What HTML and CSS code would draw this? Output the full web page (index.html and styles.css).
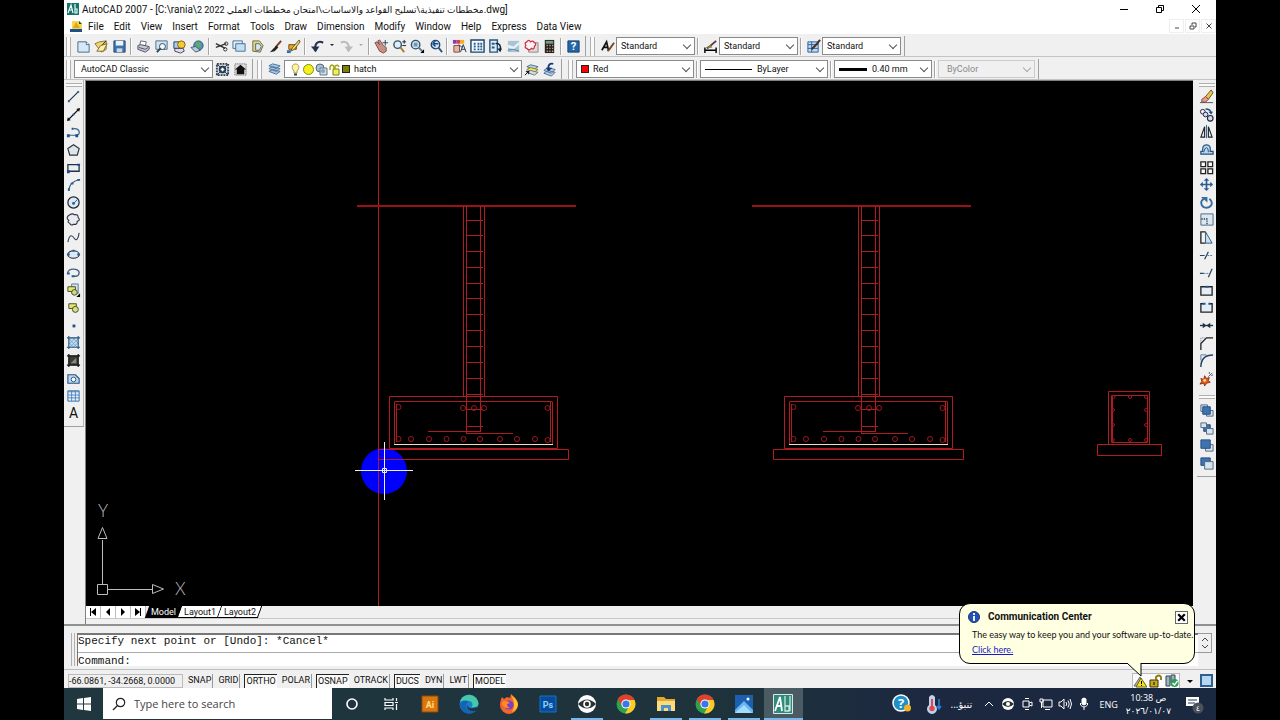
FILE: index.html
```html
<!DOCTYPE html>
<html lang="en">
<head>
    <meta charset="UTF-8">
    <meta name="viewport" content="width=device-width, initial-scale=1.0">
    <title>AutoCAD 2007</title>
    <link rel="stylesheet" href="styles.css">
</head>
<body>
<div class="app">
    <header class="titlebar">
        <svg class="logo" viewBox="0 0 12 12"><path fill="#16726a" d="M0 0h12v12H0z"/><path d="M1 10L4 2l2 8M2 7h4M8 1v9h2V6H8" fill="none" stroke="#e8fffa" stroke-width="1.2"/></svg>
        <span class="title">AutoCAD 2007 - [C:\rania\<span class="path">مخططات تنفيذية\تسليح القواعد والاساسات\امتحان مخططات العملي 2022 2</span>.dwg]</span>
        <div class="window-buttons">
            <button aria-label="Minimize"><svg viewBox="0 0 10 10"><path d="M1 5.5h8"/></svg></button>
            <button aria-label="Restore"><svg viewBox="0 0 10 10"><path d="M1.5 3.500h5v5h-5zM3.500 3V1.500h5v5H7"/></svg></button>
            <button aria-label="Close"><svg viewBox="0 0 10 10"><path d="M1 1l8 8M9 1L1 9"/></svg></button>
        </div>
    </header>

    <nav class="menubar">
        <svg class="doc" viewBox="0 0 13 13"><path d="M2 1h7l3 3v8H2z" fill="#f7d64d"/><path d="M0 9h12v3H0z" fill="#1b4f8f"/><path d="M3 8l3-6 4 6z" fill="#e2a514"/><path d="M9 1l3 3H9z" fill="#244"/></svg>
        <a href="#">File</a>
        <a href="#">Edit</a>
        <a href="#">View</a>
        <a href="#">Insert</a>
        <a href="#">Format</a>
        <a href="#">Tools</a>
        <a href="#">Draw</a>
        <a href="#">Dimension</a>
        <a href="#">Modify</a>
        <a href="#">Window</a>
        <a href="#">Help</a>
        <a href="#">Express</a>
        <a href="#">Data View</a>
        <div class="doc-buttons">
            <button aria-label="Minimize drawing"><svg viewBox="0 0 8 8"><path d="M2 6h4"/></svg></button>
            <button aria-label="Restore drawing"><svg viewBox="0 0 8 8"><path d="M1 4h4v3H1zM3 3V1h4v4H6"/></svg></button>
            <button aria-label="Close drawing"><svg viewBox="0 0 8 8"><path d="M1.500 1.500l5 5M6.500 1.500l-5 5"/></svg></button>
        </div>
    </nav>

    <div class="toolbars">
        <div class="bar">
            <span class="grip"></span>
            <button class="tool" aria-label="New"><svg viewBox="0 0 16 16"><path d="M2 3h9l3 3v8H2z" fill="#d5e8f6" stroke="#45678c"/><path d="M11 3v3h3" fill="#fff" stroke="#45678c"/></svg></button>
            <button class="tool" aria-label="Open"><svg viewBox="0 0 16 16"><path d="M1 5l5-2 7-1v9l-5 3z" fill="#f0d678" stroke="#8b7428"/><path d="M3 13l4-6 7-2-4 8z" fill="#fff0a8" stroke="#77672d"/><path d="M9 6l4-4" stroke="#222"/></svg></button>
            <button class="tool" aria-label="Save"><svg viewBox="0 0 16 16"><path d="M2 2h12v12H2z" fill="#3d72a6" stroke="#2a4a74"/><path d="M4 2h8v5H4z" fill="#e9f3fb"/><path d="M5 10h6v4H5z" fill="#c6dcee"/></svg></button>
            <span class="sep"></span>
            <button class="tool" aria-label="Plot"><svg viewBox="0 0 16 16"><path d="M5 2l6 1-1 4H4z" fill="#fff" stroke="#667"/><path d="M2 7l3-1 9 2v3l-4 3-8-3z" fill="#c6cad6" stroke="#4b5164"/><path d="M3 9l7 2 3-2" fill="none" stroke="#4b5164"/></svg></button>
            <button class="tool" aria-label="Plot Preview"><svg viewBox="0 0 16 16"><path d="M2 2h12v9H2z" fill="#cfe4f4" stroke="#4c6c8c"/><circle cx="9" cy="8" r="3.200" fill="#eef8ff" stroke="#345"/><path d="M7 10l-4 4" stroke="#345" stroke-width="2"/></svg></button>
            <button class="tool" aria-label="Publish"><svg viewBox="0 0 16 16"><path d="M2 3h8v7H2z" fill="#a9cdee" stroke="#246"/><circle cx="10" cy="6" r="4" fill="#f5c83c" stroke="#875f00"/><path d="M3 10h9l1 3-4 2-6-2z" fill="#dde" stroke="#445"/></svg></button>
            <button class="tool" aria-label="3D DWF"><svg viewBox="0 0 16 16"><circle cx="9" cy="7" r="5" fill="#4a93c4" stroke="#2c5377"/><path d="M6 4l4-1 2 4-4 3z" fill="#5fae5a"/><path d="M1 9l5-1 5 4-5 2z" fill="#bcd" stroke="#456"/></svg></button>
            <span class="sep"></span>
            <button class="tool" aria-label="Cut"><svg viewBox="0 0 16 16"><path d="M2 5l10 5M2 9l11-4" stroke="#333" stroke-width="1.500"/><circle cx="13" cy="5" r="1.800" fill="none" stroke="#333"/><circle cx="12" cy="11" r="1.800" fill="none" stroke="#333"/></svg></button>
            <button class="tool" aria-label="Copy"><svg viewBox="0 0 16 16"><path d="M1 2h10v8H1z" fill="#e0effa" stroke="#456f96"/><path d="M4 5h10v8H4z" fill="#c4dff2" stroke="#456f96"/></svg></button>
            <button class="tool" aria-label="Paste"><svg viewBox="0 0 16 16"><path d="M3 2h7l4 5-3 7-8-1z" fill="#e0d58a" stroke="#6d6a3a"/><path d="M6 5h4l2 3-2 4H6z" fill="#d5e7f5" stroke="#567"/></svg></button>
            <button class="tool" aria-label="Match Properties"><svg viewBox="0 0 16 16"><path d="M14 2L8 9" stroke="#7b3b1c" stroke-width="2"/><path d="M9 7l2 2-4 4-5 1 3-3z" fill="#222"/></svg></button>
            <button class="tool" aria-label="Block Editor"><svg viewBox="0 0 16 16"><path d="M3 6h8v5H3z" fill="#e8a534" stroke="#7b4c08"/><path d="M14 1L7 9l-2 4 4-2 6-8z" fill="#f6d860" stroke="#553"/><path d="M1 12h4v3H1z" fill="#336ab0"/></svg></button>
            <span class="sep"></span>
            <button class="tool" aria-label="Undo"><svg viewBox="0 0 16 16"><path d="M14 4C9 1 4 5 6 13" fill="none" stroke="#223153" stroke-width="2.200"/><path d="M1 8h9l-4 6z" fill="#223153"/></svg></button>
            <button class="drop" aria-label="Undo list"></button>
            <button class="tool" aria-label="Redo"><svg viewBox="0 0 16 16"><path d="M2 4c5-3 10 1 8 9" fill="none" stroke="#bbb" stroke-width="2.200"/><path d="M15 8H6l4 6z" fill="#bbb"/></svg></button>
            <button class="drop off" aria-label="Redo list"></button>
            <span class="sep"></span>
            <button class="tool" aria-label="Pan"><svg viewBox="0 0 16 16"><path d="M1 4l2-1 3 3-2-4 2-1 4 6 3 2v4l-3 2-4-2z" fill="#c98f84" stroke="#7c4d48"/><path d="M12 1v6M9 4h6" stroke="#246"/></svg></button>
            <button class="tool" aria-label="Zoom Realtime"><svg viewBox="0 0 16 16"><circle cx="6" cy="6" r="4" fill="#dceefa" stroke="#356" stroke-width="1.500"/><path d="M9 9l4 5" stroke="#a67a3c" stroke-width="2"/><path d="M11 3h4M13 1v4M11 7h4" stroke="#124"/></svg></button>
            <button class="tool" aria-label="Zoom Window"><svg viewBox="0 0 16 16"><circle cx="6" cy="6" r="4.500" fill="#cfe4f4" stroke="#356" stroke-width="1.500"/><path d="M4 4h4v4H4z" fill="#6e94b8"/><path d="M9 9l4 4" stroke="#678" stroke-width="2"/><path d="M15 11v4h-4z" fill="#000"/></svg></button>
            <button class="tool" aria-label="Zoom Previous"><svg viewBox="0 0 16 16"><circle cx="8" cy="6" r="4.500" fill="#cfe4f4" stroke="#246" stroke-width="1.500"/><path d="M5 5h6M5 5l3-3M5 5l3 3" stroke="#124a90" stroke-width="1.500"/><path d="M11 9l4 5" stroke="#357" stroke-width="2"/></svg></button>
            <span class="sep"></span>
            <button class="tool" aria-label="Properties"><svg viewBox="0 0 16 16"><path d="M1 1h4v4H1z" fill="#7a3fc0"/><path d="M5 1h4v4H5z" fill="#e04040"/><path d="M9 1h4v4H9z" fill="#f0b020"/><path d="M2 7h6v7H2z" fill="#e7b7a5" stroke="#844"/><path d="M9 14l3-8 3 8M10 11h4M7 6l4 3" fill="none" stroke="#234"/></svg></button>
            <button class="tool" aria-label="DesignCenter"><svg viewBox="0 0 16 16"><path d="M1 1h14v13H1z" fill="#f4faff" stroke="#1c4268" stroke-width="1.500"/><path d="M4 4h2v2H4zM8 4h2v2H8zM11 4h2v2h-2zM4 7h2v2H4zM8 7h2v2H8zM11 7h2v2h-2zM4 10h2v2H4zM8 10h2v2H8zM11 10h2v2h-2z" fill="#2b5a8c"/></svg></button>
            <button class="tool" aria-label="Tool Palettes"><svg viewBox="0 0 16 16"><path d="M2 1h8v13H2z" fill="#dcebf8" stroke="#2b567f" stroke-width="1.500"/><path d="M4 4h3v2H4zM4 8h3v2H4z" fill="#2b567f"/><path d="M8 5c4-1 6 2 5 6" fill="none" stroke="#123" stroke-width="1.500"/><path d="M10 10h5l-2 4z" fill="#123"/></svg></button>
            <button class="tool" aria-label="Sheet Set Manager"><svg viewBox="0 0 16 16"><path d="M2 2h12v12H2z" fill="#a9c4d6"/><path d="M2 6l6 2 6-5v3l-6 5-6-2z" fill="#e8f2f8"/><path d="M2 12l6-1 6 2" fill="none" stroke="#5c7b92"/></svg></button>
            <button class="tool" aria-label="Markup Set Manager"><svg viewBox="0 0 16 16"><path d="M5 4h10v10H5z" fill="#e3d7d9" stroke="#888"/><path d="M3 3q2-3 4 0 3-2 4 1 3 1 0 4 0 4-3 2-3 3-5 0-3-1-1-3-2-3 1-4z" fill="#fdf1f1" stroke="#d02a3c" stroke-width="1.300"/></svg></button>
            <button class="tool" aria-label="QuickCalc"><svg viewBox="0 0 16 16"><path d="M3 1h10v14H3z" fill="#2a1f1c"/><path d="M4 2h8v3H4z" fill="#6fa08a"/><path d="M5 7h1M8 7h1M11 7h1M5 10h1M8 10h1M11 10h1M5 13h1M8 13h1M11 13h1" stroke="#e9d9b8" stroke-width="1.500"/></svg></button>
            <span class="sep"></span>
            <button class="tool" aria-label="Help"><svg viewBox="0 0 16 16"><path d="M2 2h12v12H2z" fill="#2467a8" stroke="#17406d"/><text x="8" y="12" class="mark">?</text></svg></button>
            <span class="bar-end"></span>
            <span class="grip"></span>
            <button class="tool" aria-label="Text Style"><svg viewBox="0 0 16 16"><path d="M2 12L7 3l2 9M4 9h5" fill="none" stroke="#111" stroke-width="1.800"/><path d="M15 4l-5 7-2 2" fill="none" stroke="#754720" stroke-width="2"/></svg></button>
            <span class="combo style"><select aria-label="Text style"><option>Standard</option></select></span>
            <span class="sep"></span>
            <button class="tool" aria-label="Dimension Style"><svg viewBox="0 0 16 16"><path d="M2 9v6M14 9v6M2 12h12" stroke="#000" stroke-width="1.500"/><path d="M14 2L7 8l-3 2" fill="none" stroke="#634" stroke-width="2"/><path d="M4 10l4-4 2 3z" fill="#7c8c3a"/></svg></button>
            <span class="combo style"><select aria-label="Dimension style"><option>Standard</option></select></span>
            <span class="sep"></span>
            <button class="tool" aria-label="Table Style"><svg viewBox="0 0 16 16"><path d="M2 3h11v11H2z" fill="#bcd7f2" stroke="#2f5f9c"/><path d="M2 6h11M2 10h11M6 3v11" stroke="#2f5f9c"/><path d="M15 1l-5 6-4 4" fill="none" stroke="#432" stroke-width="2.200"/></svg></button>
            <span class="combo style"><select aria-label="Table style"><option>Standard</option></select></span>
            <span class="bar-end"></span>
        </div>

        <div class="bar">
            <span class="grip"></span>
            <span class="combo workspace-name"><select aria-label="Workspace"><option>AutoCAD Classic</option></select></span>
            <button class="tool" aria-label="Workspace Settings"><svg viewBox="0 0 16 16"><path d="M2 2h12v12H2z" fill="#cfd8e4" stroke="#345" stroke-dasharray="2 1" stroke-width="2"/><circle cx="8" cy="8" r="3" fill="none" stroke="#234" stroke-width="1.800"/><path d="M3 3l10 10M13 3L3 13" stroke="#234"/><circle cx="8" cy="8" r="1.500" fill="#fff"/></svg></button>
            <button class="tool" aria-label="My Workspace"><svg viewBox="0 0 16 16"><path d="M2 2h12v12H2z" fill="#ddd" stroke="#555" stroke-dasharray="1 1"/><path d="M2 8l6-5 6 5h-2v5H4V8z" fill="#111"/></svg></button>
            <span class="bar-end"></span>
            <span class="grip"></span>
            <button class="tool" aria-label="Layer Properties"><svg viewBox="0 0 16 16"><path d="M2 10l4-2 8 2-4 3zM2 7l4-2 8 2-4 3zM2 4l4-2 8 2-4 3z" fill="#a9c7e4" stroke="#4b719a"/></svg></button>
            <span class="combo layer">
                <svg viewBox="0 0 13 13"><path d="M6.500 1C3 1 2 5 5 8v2h3V8c3-3 2-7-1.500-7z" fill="#fff3a0" stroke="#a49a50"/><path d="M5 11.500h3" stroke="#445" stroke-width="2"/></svg>
                <svg viewBox="0 0 13 13"><circle cx="6.500" cy="6.500" r="5" fill="#f3f01c" stroke="#8a8a10"/></svg>
                <svg viewBox="0 0 13 13"><circle cx="5" cy="5" r="4" fill="#a7c1d6" stroke="#567"/><path d="M5 5h7v7H5z" fill="#cbdcea" stroke="#678"/><circle cx="8" cy="8" r="2" fill="#8aa4b8"/></svg>
                <svg viewBox="0 0 13 13"><path d="M2 7V4q2-4 4 0v2" fill="none" stroke="#a2a514" stroke-width="1.500"/><path d="M5 6h6v6H5z" fill="#eef05c" stroke="#7d7f18"/><path d="M7 6V3q3-2 4 1" fill="none" stroke="#a2a514" stroke-width="1.500"/></svg>
                <span class="swatch olive"></span>
                <select aria-label="Layer"><option>hatch</option></select>
            </span>
            <button class="tool" aria-label="Make Object's Layer Current"><svg viewBox="0 0 16 16"><path d="M3 5l4-2 8 2-4 3z" fill="#b9d2e6" stroke="#4b6b85"/><path d="M3 8l4-2 8 2-4 3z" fill="#f2ea5e" stroke="#85802a"/><path d="M3 11l4-2 8 2-4 3z" fill="#d5dce2" stroke="#678"/><path d="M1 14l4-4M2 10h3v3" fill="none" stroke="#000"/></svg></button>
            <button class="tool" aria-label="Layer Previous"><svg viewBox="0 0 16 16"><path d="M2 12l4-3 8 2-4 4zM2 9l4-3 8 2-4 4z" fill="#b9d2e6" stroke="#4b6b95"/><path d="M12 2C8 1 6 4 7 7" fill="none" stroke="#15397a" stroke-width="2"/><path d="M4 6h7l-4 4z" fill="#15397a"/></svg></button>
            <span class="bar-end layer-end"></span>
            <span class="grip"></span>
            <span class="combo color"><span class="swatch red"></span><select aria-label="Color"><option>Red</option></select></span>
            <span class="sep"></span>
            <span class="combo linetype"><span class="sample thin"></span><select aria-label="Linetype"><option>ByLayer</option></select></span>
            <span class="sep"></span>
            <span class="combo weight"><span class="sample thick"></span><select aria-label="Lineweight"><option>0.40 mm</option></select></span>
            <span class="sep"></span>
            <span class="combo plot"><select aria-label="Plot style" disabled><option>ByColor</option></select></span>
            <span class="bar-end"></span>
        </div>
    </div>

    <main class="workspace">
        <aside class="strip left">
            <span class="grip-h"></span>
            <div class="tools draw-tools">
                <button aria-label="Line"><svg viewBox="0 0 16 16"><path d="M3 13L13 3" stroke="#234" stroke-width="1.200"/><path d="M2 12h2v2H2zM12 2h2v2h-2z" fill="#27639c"/></svg></button>
                <button aria-label="Construction Line"><svg viewBox="0 0 16 16"><path d="M2 14L14 2" stroke="#111" stroke-width="1.500"/><path d="M1 15l1-4 3 3zM15 1l-4 1 3 3z" fill="#111"/><circle cx="8" cy="8" r="1.200" fill="#27639c"/></svg></button>
                <button aria-label="Polyline"><svg viewBox="0 0 16 16"><path d="M2 12h9q4-1 3-4-1-3-5-3H8" fill="none" stroke="#36638c" stroke-width="1.300"/><path d="M1 11h3v3H1zM10 11h3v3h-3zM6 4h2v2H6z" fill="#1d4f86"/></svg></button>
                <button aria-label="Polygon"><svg viewBox="0 0 16 16"><path d="M8 3l6 4-2 7H4L2 7z" fill="#dde6ee" stroke="#333" stroke-width="1.300"/></svg></button>
                <button aria-label="Rectangle"><svg viewBox="0 0 16 16"><path d="M2 5h12v7H2z" fill="#e9eff5" stroke="#234" stroke-width="1.400"/><path d="M1 11h3v3H1zM12 4h3v2h-3z" fill="#1d4f86"/></svg></button>
                <button aria-label="Arc"><svg viewBox="0 0 16 16"><path d="M3 14Q4 5 14 3" fill="none" stroke="#456" stroke-width="1.200"/><path d="M2 12h2v3H2zM5 6h3v2H5zM12 2h3v2h-3z" fill="#1d5f9c"/></svg></button>
                <button aria-label="Circle"><svg viewBox="0 0 16 16"><circle cx="8" cy="8" r="6" fill="#dce9f4" stroke="#223" stroke-width="1.300"/><path d="M8 9l4-4" stroke="#1d5f9c"/><circle cx="8" cy="9" r="1.500" fill="#1d5f9c"/></svg></button>
                <button aria-label="Revision Cloud"><svg viewBox="0 0 16 16"><path d="M4 3q3-2 5 0 4-1 4 3 3 3-1 4 0 4-4 3-3 2-4-1-3-1-1-3-4-3 1-6z" fill="#e8ecf2" stroke="#334" stroke-width="1.200"/></svg></button>
                <button aria-label="Spline"><svg viewBox="0 0 16 16"><path d="M2 13C4 3 7 6 9 9s4 1 5-6" fill="none" stroke="#345" stroke-width="1.200"/></svg></button>
                <button aria-label="Ellipse"><svg viewBox="0 0 16 16"><ellipse cx="8" cy="8" rx="6" ry="4" fill="#dce9f4" stroke="#223" stroke-width="1.200"/><path d="M1 7h3v2H1zM12 7h3v2h-3zM7 3h2v2H7z" fill="#1d5f9c"/></svg></button>
                <button aria-label="Ellipse Arc"><svg viewBox="0 0 16 16"><path d="M2 9C1 3 14 3 14 8c0 4-3 4-6 4" fill="none" stroke="#45637e" stroke-width="1.500"/><path d="M1 8h3v2H1zM6 11h3v2H6z" fill="#1d5f9c"/></svg></button>
                <button aria-label="Insert Block"><svg viewBox="0 0 16 16"><path d="M6 1h7v10H6z" fill="#cfe2f2" stroke="#5a7b98"/><path d="M2 4h8v5H2z" fill="#e5e774" stroke="#444a1c"/><circle cx="9" cy="10" r="3" fill="#c5dd8a" stroke="#444a1c"/><path d="M15 11v4h-4z" fill="#000"/></svg></button>
                <button aria-label="Make Block"><svg viewBox="0 0 16 16"><path d="M3 4h8v5H3z" fill="#e5e774" stroke="#444a1c"/><circle cx="10" cy="10" r="3.200" fill="#d2e08a" stroke="#444a1c"/></svg></button>
                <button aria-label="Point"><svg viewBox="0 0 16 16"><path d="M7 7h3v3H7z" fill="#1d4f86"/></svg></button>
                <button aria-label="Hatch"><svg viewBox="0 0 16 16"><path d="M3 3h10v10H3z" fill="#c3dcf0"/><path d="M3 6l3-3M3 10l7-7M4 13l9-9M8 13l5-5M3 8l5 5M3 4l9 9M7 3l6 6" stroke="#6d9cc4" stroke-width=".8"/><path d="M3 1v14M13 1v14M1 3h14M1 13h14" stroke="#27547f" stroke-width="1.200"/></svg></button>
                <button aria-label="Gradient"><svg viewBox="0 0 16 16"><path d="M3 3h10v10H3z" fill="#3c3c3a"/><path d="M5 11l6-6v6z" fill="#8c8a74"/><path d="M3 1v14M13 1v14M1 3h14M1 13h14" stroke="#111" stroke-width="1.300"/></svg></button>
                <button aria-label="Region"><svg viewBox="0 0 16 16"><path d="M2 4h8l4 4v5H2z" fill="#bcd8f0" stroke="#27547f" stroke-width="1.200"/><circle cx="8" cy="9" r="2.500" fill="#f5faff" stroke="#27547f"/></svg></button>
                <button aria-label="Table"><svg viewBox="0 0 16 16"><path d="M2 3h12v11H2z" fill="#e6f1fb" stroke="#2f68a8"/><path d="M2 4h12M2 7.500h12M2 10.500h12M6 3v11M10 3v11" stroke="#4d83bd"/></svg></button>
                <button class="letter" aria-label="Multiline Text">A</button>
            </div>
        </aside>

        <section class="viewport">
            <!-- model space, footing sections -->
            <svg class="drawing" viewBox="86 81 1107 525" preserveAspectRatio="xMidYMid slice">
                <defs>
                    <g id="footing">
                        <path class="ground" d="M357 206H576"/>
                        <path d="M463.500 206V396M484.500 206V396M466.500 206V433M480.500 206V431"/>
                        <path d="M466 220.500h17M466 235.500h17M466 251.500h17M466 267.500h17M466 283.500h17M466 298.500h17M466 314.500h17M466 330.500h17M466 346.500h17M466 362.500h17M466 378.500h17M466 394.500h17M466 409.500h17M466 426.500h17"/>
                        <path d="M428 431.500h53M466 433.500h47"/>
                        <path d="M389.500 396.500h168v52h-168zM394.500 401.500h158M394.500 402v42M396.500 404v38M550.500 402v40M552.500 402v42"/>
                        <g class="rebar">
                            <circle cx="398.500" cy="407" r="2.500"/><circle cx="463" cy="408" r="2.500"/><circle cx="474" cy="408" r="2.500"/><circle cx="484" cy="408" r="2.500"/><circle cx="547.500" cy="408" r="2.500"/>
                            <circle cx="398.500" cy="439" r="2.500"/><circle cx="411" cy="439" r="2.500"/><circle cx="429" cy="439" r="2.500"/><circle cx="446.500" cy="439" r="2.500"/><circle cx="463.500" cy="439" r="2.500"/><circle cx="480" cy="439" r="2.500"/><circle cx="500" cy="439" r="2.500"/><circle cx="517" cy="439" r="2.500"/><circle cx="535" cy="439" r="2.500"/><circle cx="547.500" cy="440" r="2.500"/>
                        </g>
                        <path class="pale" d="M394 444.500h159"/>
                        <path d="M378.500 449.500h190v10h-190z"/>
                    </g>
                </defs>
                <circle cx="384" cy="471" r="23" fill="#0000fe"/>
                <g class="lines">
                    <path d="M378.500 81V606"/>
                    <use href="#footing"/>
                    <use href="#footing" x="395"/>
                    <path d="M1108.500 391.500h41v53h-41zM1111.500 395.500h36v47h-36zM1097.500 444.500h64v11h-64z"/>
                    <path d="M1112.500 396v46M1147.500 396v46"/>
                    <g class="rebar">
                        <circle cx="1113.500" cy="397" r="1.500"/><circle cx="1130" cy="397" r="1.500"/><circle cx="1146" cy="397" r="1.500"/><circle cx="1113" cy="410" r="1.500"/><circle cx="1146" cy="410" r="1.500"/><circle cx="1113" cy="425" r="1.500"/><circle cx="1146" cy="425" r="1.500"/><circle cx="1113" cy="440" r="1.500"/><circle cx="1130" cy="440" r="1.500"/><circle cx="1146" cy="440" r="1.500"/>
                    </g>
                </g>
                <g class="cursor"><path d="M355 470.500h58M384.500 442v58M382.500 468.500h4v4h-4z"/></g>
                <g class="ucs">
                    <path d="M97.500 584.500h10v10h-10zM107 589.500h45M102.500 584V540M152.500 584.500v9l11-4.500zM98 538.500h9l-4.500-11z"/>
                    <text x="175" y="595">X</text>
                    <text x="98" y="517">Y</text>
                </g>
            </svg>
            <div class="tabs">
                <button aria-label="First tab"><svg viewBox="0 0 10 10"><path d="M2 1h1v8H2zM8 1v8L3 5z"/></svg></button>
                <button aria-label="Previous tab"><svg viewBox="0 0 10 10"><path d="M7 1v8L3 5z"/></svg></button>
                <button aria-label="Next tab"><svg viewBox="0 0 10 10"><path d="M3 1v8l4-4z"/></svg></button>
                <button aria-label="Last tab"><svg viewBox="0 0 10 10"><path d="M7 1h1v8H7zM2 1v8l5-4z"/></svg></button>
                <a class="tab active" href="#">Model</a>
                <a class="tab" href="#">Layout1</a>
                <a class="tab" href="#">Layout2</a>
            </div>
        </section>

        <aside class="strip right">
            <span class="grip-h"></span>
            <div class="tools modify-tools">
                <button aria-label="Erase"><svg viewBox="0 0 16 16"><path d="M7 8l6-7 2 3-5 7z" fill="#efc443" stroke="#5b5230"/><path d="M3 11l4-3 3 3-3 3H3z" fill="#e89a8c" stroke="#844"/><path d="M1 14.500h14" stroke="#555"/></svg></button>
                <button aria-label="Copy objects"><svg viewBox="0 0 16 16"><circle cx="4" cy="5" r="2.500" fill="#eef" stroke="#223"/><circle cx="7" cy="8" r="2.500" fill="#cde" stroke="#223"/><circle cx="12" cy="12" r="3" fill="#cde" stroke="#223" stroke-width="1.200"/><path d="M7 2q5 0 6 4" fill="none" stroke="#1d4f86" stroke-width="1.600"/><path d="M10 5h5l-2 3z" fill="#1d4f86"/></svg></button>
                <button aria-label="Mirror"><svg viewBox="0 0 16 16"><path d="M6 3v11H2zM10 3v11h4z" fill="#e4eef6" stroke="#222" stroke-width="1.200"/><path d="M8 1v14" stroke="#1d5f9c"/></svg></button>
                <button aria-label="Offset"><svg viewBox="0 0 16 16"><path d="M2 13h13v-3h-3q1-7-4-7T4 10H2z" fill="#bcd8f0" stroke="#234f7c" stroke-width="1.300"/><path d="M5 11q1-5 3-5t2 5" fill="none" stroke="#234f7c"/></svg></button>
                <button aria-label="Array"><svg viewBox="0 0 16 16"><path d="M2 2h5v5H2zM9.500 2h5v5h-5zM2 9.500h5v5H2zM9.500 9.500h5v5h-5z" fill="#fff" stroke="#222" stroke-width="1.400"/></svg></button>
                <button aria-label="Move"><svg viewBox="0 0 16 16"><path d="M8 3v10M3 8h10" stroke="#2b5f93" stroke-width="1.800"/><path d="M8 1l3 3H5zM8 15l3-3H5zM1 8l3-3v6zM15 8l-3-3v6z" fill="#2b5f93"/></svg></button>
                <button aria-label="Rotate"><svg viewBox="0 0 16 16"><path d="M11 4q4 3 2 7-3 4-8 2-4-3-2-7l2-2" fill="none" stroke="#3a6c9c" stroke-width="2"/><path d="M2 2h7v6z" fill="#3a6c9c"/></svg></button>
                <button aria-label="Scale"><svg viewBox="0 0 16 16"><path d="M2 2h13v12H2z" fill="#dbe7f1" stroke="#4a6884"/><path d="M2.500 7.500h6v6" fill="none" stroke="#345" stroke-width="1.500" stroke-dasharray="1.500 1"/></svg></button>
                <button aria-label="Stretch"><svg viewBox="0 0 16 16"><path d="M7 2H2v12h5" fill="none" stroke="#222" stroke-width="1.400"/><path d="M7 2v12h7z" fill="#cfe0ef" stroke="#2a567f"/></svg></button>
                <button aria-label="Trim"><svg viewBox="0 0 16 16"><path d="M1 8h5M6 12l4-8" stroke="#246" stroke-width="1.300"/><path d="M9 8h6" stroke="#579" stroke-dasharray="2 1"/></svg></button>
                <button aria-label="Extend"><svg viewBox="0 0 16 16"><path d="M1 9h4M10 13l4-9" stroke="#246" stroke-width="1.300"/><path d="M5 9h6" stroke="#579" stroke-dasharray="2 1"/></svg></button>
                <button aria-label="Break at Point"><svg viewBox="0 0 16 16"><path d="M2 4h12v9H2z" fill="#e4eef6" stroke="#222" stroke-width="1.400"/><path d="M7 3h3v2H7z" fill="#1d5f9c"/></svg></button>
                <button aria-label="Break"><svg viewBox="0 0 16 16"><path d="M5 4H2v9h12V4h-3" fill="#e4eef6" stroke="#222" stroke-width="1.400"/><path d="M4 3h3v2H4zM10 3h2v2h-2z" fill="#1d5f9c"/></svg></button>
                <button aria-label="Join"><svg viewBox="0 0 16 16"><path d="M1 8h14" stroke="#234" stroke-width="1.500"/><path d="M8 8L4 5v6zM8 8l4-3v6z" fill="#234"/></svg></button>
                <button aria-label="Chamfer"><svg viewBox="0 0 16 16"><path d="M2 15V8l6-6h7" fill="none" stroke="#222" stroke-width="1.400"/><path d="M2 7V2h5" fill="none" stroke="#579" stroke-dasharray="1 1"/></svg></button>
                <button aria-label="Fillet"><svg viewBox="0 0 16 16"><path d="M2 15q0-13 13-13" fill="none" stroke="#246" stroke-width="1.600"/><path d="M2 8V2h6" fill="none" stroke="#579"/></svg></button>
                <button aria-label="Explode"><svg viewBox="0 0 16 16"><path d="M2 8l3 1 1-4 2 3 3-1-1 3 2 2-4 1-2 3-1-3-4 1 2-3z" fill="#e25a1e" stroke="#7a1c08" stroke-width=".8"/><circle cx="6" cy="10" r="1.500" fill="#ffe26a"/><path d="M10 6l4-4M13 5l2-1M11 3V1" stroke="#555"/></svg></button>
            </div>
            <span class="grip-h second"></span>
            <div class="tools order-tools">
                <button aria-label="Bring to Front"><svg viewBox="0 0 16 16"><path d="M2 2h7v7H2zM8 8h7v6H8z" fill="#d4e4f1" stroke="#567"/><path d="M4 4h8v8H4z" fill="#3f73b0" stroke="#234f85"/></svg></button>
                <button aria-label="Send to Back"><svg viewBox="0 0 16 16"><path d="M5 4h7v7H5z" fill="#3f73b0" stroke="#234f85"/><path d="M2 2h6v5H2zM8 8h7v6H8z" fill="#d4e4f1" stroke="#567"/></svg></button>
                <button aria-label="Bring Above Objects"><svg viewBox="0 0 16 16"><path d="M7 7h8v7H7z" fill="#d4e4f1" stroke="#567"/><path d="M2 2h10v9H2z" fill="#3f73b0" stroke="#234f85"/></svg></button>
                <button aria-label="Send Under Objects"><svg viewBox="0 0 16 16"><path d="M2 2h10v8H2z" fill="#3f73b0" stroke="#234f85"/><path d="M6 6h9v8H6z" fill="#d4e4f1" stroke="#567"/></svg></button>
            </div>
        </aside>
    </main>

    <section class="command">
        <span class="command-grip"></span>
        <div class="command-box">
            <p class="history">Specify next point or [Undo]: *Cancel*</p>
            <div class="prompt"><label for="command-line">Command:</label><input id="command-line" type="text"></div>
        </div>
        <div class="scroller">
            <button aria-label="Scroll up"><svg viewBox="0 0 8 8"><path d="M1 6l3-3 3 3"/></svg></button>
            <button aria-label="Scroll down"><svg viewBox="0 0 8 8"><path d="M1 2l3 3 3-3"/></svg></button>
        </div>
    </section>

    <footer class="status">
        <span class="coords">-66.0861, -34.2668, 0.0000</span>
        <button>SNAP</button>
        <button>GRID</button>
        <button class="on">ORTHO</button>
        <button>POLAR</button>
        <button class="on">OSNAP</button>
        <button>OTRACK</button>
        <button class="on">DUCS</button>
        <button>DYN</button>
        <button>LWT</button>
        <button class="on">MODEL</button>
        <div class="status-tray">
            <svg viewBox="0 0 14 14"><path d="M1 12l6-9 3 9z" fill="#bbb" stroke="#666"/><path d="M8 4l6 9H3z" fill="#f3e11c" stroke="#6c6510"/><path d="M8.500 7v3M8.500 11v1" stroke="#000"/></svg>
            <svg viewBox="0 0 14 14"><path d="M1 6h8v7H1z" fill="#c9a91c" stroke="#3c3208"/><path d="M7 6V3q3-3 5 0v3" fill="none" stroke="#8a7412" stroke-width="1.800"/><path d="M5 8v3" stroke="#000"/></svg>
            <svg viewBox="0 0 14 14"><path d="M1 2h4v10H1zM6 1h4v8H6z" fill="#9ab4bd" stroke="#345"/><circle cx="9.500" cy="9" r="4" fill="#2f9b57"/><path d="M7.500 9l2 2 3-4" fill="none" stroke="#fff" stroke-width="1.300"/></svg>
        </div>
        <button class="tray-menu" aria-label="Tray menu"></button>
        <button class="clean" aria-label="Clean Screen"></button>
    </footer>

    <div class="balloon" role="dialog" aria-labelledby="balloon-title">
        <svg class="info" viewBox="0 0 12 12"><circle cx="6" cy="6" r="5.500" fill="#2350b8" stroke="#173577"/><path d="M6 2v2M6 5v5" stroke="#fff" stroke-width="1.800"/></svg>
        <h2 id="balloon-title">Communication Center</h2>
        <button aria-label="Close"><svg viewBox="0 0 10 10"><path d="M2 2l6 6M8 2L2 8"/></svg></button>
        <p>The easy way to keep you and your software up-to-date.<br><a href="#">Click here.</a></p>
        <svg class="tail" viewBox="0 0 16 14"><path d="M1 0l14 13V0" fill="#ffffe1" stroke="#000"/></svg>
    </div>

    <div class="taskbar">
        <button class="start" aria-label="Start"><svg viewBox="0 0 14 14"><path d="M0 2l6-1v5.500H0zM7 1l7-1v6.500H7zM0 7.500h6V13l-6-1zM7 7.500h7V14l-7-1z" fill="#fff"/></svg></button>
        <label class="search">
            <svg viewBox="0 0 14 14"><circle cx="8.500" cy="5.500" r="4.200"/><path d="M5.500 8.500L1 13"/></svg>
            <input type="text" placeholder="Type here to search" aria-label="Search">
        </label>
        <div class="apps">
            <button aria-label="Cortana"><svg viewBox="0 0 20 20"><circle cx="10" cy="10" r="5" fill="none" stroke="#fff" stroke-width="1.600"/></svg></button>
            <button aria-label="Task View"><svg viewBox="0 0 20 20"><path d="M4 4v2h8V4M4 16v-2h8v2M4 8.500h8v3H4zM15.500 4v3M15.500 10v6M14 8.500h3" fill="none" stroke="#fff" stroke-width="1.200"/></svg></button>
            <button aria-label="Illustrator"><svg viewBox="0 0 20 20"><path d="M2 2h16v16H2z" fill="#d9760f" stroke="#8f4a06"/><text x="10" y="13.500" fill="#ffe082">Ai</text></svg></button>
            <button aria-label="Edge"><svg viewBox="0 0 20 20"><circle cx="10" cy="10" r="9.500" fill="#1b7fd0"/><path d="M1 8C3-1 17-2 19.500 9c0 4-4 5-7 4 2-2 1-6-3-6-4-1-7 0-8.500 1z" fill="#46c9a8"/><path d="M1 10c2-4 6-4 9-2-4 1-4 7 1 9 3 1 5 0 7-1-3 5-16 6-17-6z" fill="#1464b4"/><path d="M9 10c-1 3 2 5 5 4l5-1v3c-6 3-13 0-10-6z" fill="#20353f"/></svg></button>
            <button aria-label="Firefox"><svg viewBox="0 0 20 20"><path d="M3 3l2 2 3-2 3 1 1-4c2 2 7 5 7 11a9 9 0 01-18 0c0-3 1-6 2-8z" fill="#f2662b"/><path d="M12 1c3 3 7 5 7 10-1 4-4 6-6 7 3-5 3-10-1-17z" fill="#fdc22e"/><circle cx="10" cy="11" r="4.500" fill="#7a41c6"/><path d="M3 8c3-2 6-1 8 1l-3 1c0 2 1 3 3 4-4 1-8-2-8-6z" fill="#ff8b27"/></svg></button>
            <button aria-label="Photoshop"><svg viewBox="0 0 20 20"><path d="M2 2h16v16H2z" fill="#0a4a9a" stroke="#0a79c9"/><text x="10" y="13.500" fill="#8bd2ff">Ps</text></svg></button>
            <button class="open" aria-label="Viewer"><svg viewBox="0 0 20 20"><circle cx="10" cy="10" r="9" fill="#fff"/><path d="M1 10q9-9 18 0-9 9-18 0z" fill="#2b3034"/><circle cx="10" cy="10" r="3.800" fill="#fff"/><circle cx="10" cy="10" r="2.200" fill="#2b3034"/></svg></button>
            <button aria-label="Chrome"><svg viewBox="0 0 20 20"><circle cx="10" cy="10" r="9.500" fill="#2fa24f"/><path d="M1.800 5.200A9.500 9.500 0 0118.500 6H10l-4 6z" fill="#e2402f"/><path d="M18.500 6A9.500 9.500 0 019 19.500l5-8L13 6z" fill="#fbca23"/><circle cx="10" cy="10" r="4.600" fill="#fff"/><circle cx="10" cy="10" r="3.600" fill="#3b78e7"/></svg></button>
            <button class="open" aria-label="File Explorer"><svg viewBox="0 0 20 20"><path d="M1 3h7l2 2h9v12H1z" fill="#e3a92a"/><path d="M1 7h18v10H1z" fill="#fbdc78"/><path d="M5 17v-6h10v6h-3v-3H8v3z" fill="#4d91cf"/></svg></button>
            <button class="open" aria-label="Chrome window"><svg viewBox="0 0 20 20"><circle cx="10" cy="10" r="9.500" fill="#2fa24f"/><path d="M1.800 5.200A9.500 9.500 0 0118.500 6H10l-4 6z" fill="#e2402f"/><path d="M18.500 6A9.500 9.500 0 019 19.500l5-8L13 6z" fill="#fbca23"/><circle cx="10" cy="10" r="4.600" fill="#fff"/><circle cx="10" cy="10" r="3.600" fill="#3b78e7"/></svg></button>
            <button class="open" aria-label="Photos"><svg viewBox="0 0 20 20"><path d="M1 1h18v18H1z" fill="#1c5fae"/><path d="M1 16l9-9 9 9v3H1z" fill="#66b8f2"/><path d="M1 19l9-8 8 8z" fill="#a4dcff"/><circle cx="14" cy="5" r="1.500" fill="#fff"/></svg></button>
            <button class="open current" aria-label="AutoCAD"><svg viewBox="0 0 20 20"><path d="M.500.500h19v19H.500z" fill="#2e8a7a" stroke="#d8e8e4"/><path d="M2 17L7 3l2 14M4 12h5" fill="none" stroke="#fff" stroke-width="1.800"/><path d="M12 2v15h4v-5h-4M17 2v15" fill="none" stroke="#cfe8e0" stroke-width="1.300"/></svg></button>
        </div>
        <div class="tray">
            <button class="assist" aria-label="Assistance"><svg viewBox="0 0 20 20"><circle cx="9" cy="9" r="8" fill="#1f8fc9" stroke="#fff" stroke-width="1.500"/><text x="9" y="13.500" class="ask">?</text><circle cx="15.500" cy="14" r="3.500" fill="#f0b323"/></svg></button>
            <button class="weather"><svg viewBox="0 0 16 20"><path d="M3 3q3-4 6 0v8a5 5 0 11-6 0z" fill="#b9d3f0"/><path d="M6 5v9" stroke="#e2474a" stroke-width="2"/><circle cx="6" cy="14.500" r="2.700" fill="#e2474a"/><path d="M13 5v9M11 12l2 3 2-3" fill="none" stroke="#2f7fd6" stroke-width="1.500"/></svg><span dir="rtl">تنبؤ...</span></button>
            <div class="tray-icons">
                <button aria-label="Hidden icons"><svg viewBox="0 0 14 14"><path d="M3 9l4-4 4 4"/></svg></button>
                <button aria-label="Viewer status"><svg viewBox="0 0 14 14"><circle cx="7" cy="7" r="6" fill="#fff" stroke="none"/><path d="M1 7q6-6 12 0-6 6-12 0z" fill="#2b3034" stroke="none"/><circle cx="7" cy="7" r="2" fill="#fff" stroke="none"/></svg></button>
                <button aria-label="Meet Now"><svg viewBox="0 0 14 14"><path d="M3 4h6v6H3zM9 6l3-1v4L9 8M5 1.500h4M5 12.500h4"/></svg></button>
                <button aria-label="Network"><svg viewBox="0 0 14 14"><path d="M4 3h9v7H4zM6 12.500h5M1 2h3v3H1zM2.500 5v6"/></svg></button>
                <button aria-label="Volume"><svg viewBox="0 0 14 14"><path d="M1 5h2l3-3v10L3 9H1zM8 5q1.500 2 0 4M10 3.500q2.500 3.500 0 7M12 2q3 5 0 10"/></svg></button>
                <button aria-label="Microphone"><svg viewBox="0 0 14 14"><path d="M5 2q2-2 4 0v5q-2 2-4 0z" fill="#fff"/><path d="M3.500 6v2q3.500 4 7 0V6M7 10v3"/></svg></button>
            </div>
            <button class="lang">ENG</button>
            <button class="clock"><span>10:38 ص</span><span>٢٠٢٦/٠١/٠٧</span></button>
            <button class="notify" aria-label="Notifications"><svg viewBox="0 0 20 20"><path d="M2 3h13v9h-2v3l-3-3H2z" fill="#fff"/><path d="M4 6h9M4 9h7" stroke="#24344a"/><circle cx="14" cy="14" r="5.500" fill="#4a5158"/><text x="14" y="17">٤</text></svg></button>
        </div>
    </div>
</div>
</body>
</html>
```

FILE: styles.css
```css
* {
    box-sizing: border-box;
}
body {
    margin: 0;
    background-color: #000;
    font-family: Roboto, "Liberation Sans", "DejaVu Sans", sans-serif;
    font-size: 10px;
    color: #111;
}
button {
    padding: 0;
    border: none;
    background: none;
    font: inherit;
    color: inherit;
}
button svg {
    display: block;
}
a {
    color: inherit;
    text-decoration: none;
}
.app {
    position: relative;
    display: flex;
    flex-direction: column;
    width: 90%;
    height: 100vh;
    margin: 0 auto;
    background-color: #f0f0f0;
}

/* title and menu */
.titlebar {
    display: flex;
    align-items: center;
    height: 18px;
    padding-left: 3px;
    background-color: #fff;
}
.logo {
    width: 12px;
    height: 12px;
    margin-right: 3px;
}
.title {
    font-size: 10px;
    white-space: nowrap;
}
.path {
    font-size: 9px;
}
.window-buttons {
    display: flex;
    margin-left: auto;
    padding-right: 2px;
}
.window-buttons button {
    display: grid;
    place-items: center;
    width: 36px;
}
.window-buttons svg {
    width: 10px;
    height: 10px;
    fill: none;
    stroke: #000;
}
.menubar {
    display: flex;
    align-items: center;
    gap: 10px;
    height: 16px;
    padding-left: 6px;
    background-color: #fff;
    font-size: 10px;
}
.doc {
    width: 13px;
    height: 13px;
    margin-right: -5px;
}
.doc-buttons {
    display: flex;
    gap: 1px;
    margin-left: auto;
}
.doc-buttons button {
    display: grid;
    place-items: center;
    width: 15px;
    height: 14px;
    border: 1px solid #eee;
}
.doc-buttons svg {
    width: 8px;
    height: 8px;
    fill: none;
    stroke: #444;
}

/* toolbars */
.bar {
    display: flex;
    align-items: center;
    height: 23px;
    padding-top: 2px;
    border-bottom: 1px solid #c4c4c4;
}
.grip {
    width: 5px;
    height: 19px;
    margin: 0 3px 0 2px;
    border-left: 1px solid #b0b0b0;
    border-right: 1px solid #b0b0b0;
    background-color: #fafafa;
}
.bar-end {
    align-self: stretch;
    width: 4px;
    border-right: 1px solid #a0a0a0;
    margin-right: 2px;
}
.layer-end {
    margin-right: 4px;
}
.tool {
    display: grid;
    place-items: center;
    width: 18px;
    height: 20px;
}
.tool svg {
    width: 15px;
    height: 15px;
}
.mark {
    font-size: 12px;
    font-weight: bold;
    fill: #fff;
    text-anchor: middle;
}
.sep {
    width: 2px;
    height: 17px;
    margin: 0 2px;
    border-left: 1px solid #a5a5a5;
    border-right: 1px solid #fff;
}
.drop {
    width: 11px;
    height: 20px;
}
.drop::after {
    content: "";
    display: block;
    width: 0;
    margin: auto;
    border: 2px solid transparent;
    border-top-color: #222;
}
.drop.off::after {
    border-top-color: #aaa;
}
.combo {
    position: relative;
    display: flex;
    align-items: center;
    height: 18px;
    padding-left: 4px;
    border: 1px solid #8a8a8a;
    background-color: #fff;
}
.combo svg {
    flex: none;
    width: 13px;
    height: 13px;
}
.combo::after {
    content: "";
    position: absolute;
    right: 4px;
    top: 4px;
    width: 5px;
    height: 5px;
    border-right: 1px solid #555;
    border-bottom: 1px solid #555;
    transform: rotate(45deg);
    pointer-events: none;
}
.combo select {
    flex: 1;
    min-width: 0;
    height: 100%;
    padding: 0;
    border: none;
    background: none;
    appearance: none;
    font: inherit;
    font-size: 9px;
    color: #111;
}
.style {
    width: 79px;
}
.workspace-name {
    width: 139px;
    padding-left: 6px;
}
.layer {
    width: 238px;
    margin-left: 1px;
}
.color {
    width: 118px;
}
.linetype {
    width: 128px;
}
.weight {
    width: 98px;
}
.plot {
    width: 97px;
    padding-left: 8px;
    border-color: #ccc;
    background-color: #f0f0f0;
}
.plot select {
    color: #888;
    opacity: 1;
}
.plot::after {
    border-color: #aaa;
}
.swatch {
    width: 8px;
    height: 8px;
    margin-right: 4px;
    border: 1px solid #222;
}
.olive {
    background-color: #7f7f00;
    margin-left: 1px;
}
.red {
    background-color: #f00;
}
.sample {
    margin-right: 5px;
    background-color: #000;
}
.thin {
    width: 47px;
    height: 1px;
}
.thick {
    width: 28px;
    height: 3px;
}

/* drawing area */
.workspace {
    flex: 1;
    display: flex;
    min-height: 0;
}
.strip {
    flex: none;
    align-self: flex-start;
    display: flex;
    flex-direction: column;
    align-items: center;
    padding: 3px 0;
    border-bottom: 1px solid #a0a0a0;
}
.left {
    width: 20px;
    height: 347px;
    border-right: 1px solid #b5b5b5;
}
.right {
    width: 19px;
    height: 397px;
    margin-left: 4px;
}
.grip-h {
    flex: none;
    width: 16px;
    height: 4px;
    margin-bottom: 1px;
    border-top: 1px solid #b0b0b0;
    border-bottom: 1px solid #b0b0b0;
    background-color: #fafafa;
}
.second {
    margin: 8px 0 3px;
}
.tools {
    display: flex;
    flex-direction: column;
}
.tools button {
    flex: 1;
    display: grid;
    place-items: center;
    width: 18px;
    min-height: 0;
}
.tools svg {
    width: 15px;
    height: 15px;
}
.draw-tools {
    height: 334px;
}
.modify-tools {
    height: 299px;
}
.order-tools {
    height: 70px;
}
.letter {
    font-size: 14px;
    line-height: 14px;
}
.viewport {
    flex: 1;
    display: flex;
    flex-direction: column;
    min-width: 0;
    margin-left: 1px;
    padding-bottom: 5px;
    border-top: 1px solid #808080;
    border-left: 1px solid #808080;
}
.drawing {
    flex: 1;
    display: block;
    width: 100%;
    min-height: 0;
    background-color: #000;
}
.lines {
    fill: none;
    stroke: #b01c20;
}
.ground {
    stroke: #9a1216;
    stroke-width: 2;
}
.rebar {
    stroke: #a01820;
}
.pale {
    stroke: #f4dcc0;
}
.cursor {
    fill: none;
    stroke: #f0f0f0;
}
.ucs {
    fill: none;
    stroke: #bdbdbd;
}
.ucs text {
    fill: #bdbdbd;
    stroke: none;
    font-family: Lato, sans-serif;
    font-size: 17px;
    font-weight: 300;
}
.tabs {
    flex: none;
    display: flex;
    height: 13px;
    border-bottom: 1px solid #c8c8c8;
    font-size: 9px;
}
.tabs button {
    display: grid;
    place-items: center;
    width: 15px;
    border-right: 1px solid #bbb;
    background-color: #fff;
}
.tabs button svg {
    width: 10px;
    height: 10px;
}
.tab {
    position: relative;
    z-index: 0;
    padding: 0 4px;
    line-height: 13px;
}
.tab::before {
    content: "";
    position: absolute;
    inset: 0;
    z-index: -1;
    border-right: 1px solid #000;
    border-bottom: 1px solid #000;
    background-color: #fff;
    transform: skewX(-20deg);
}
.tab.active {
    margin-left: 1px;
    color: #fff;
}
.tab.active::before {
    background-color: #000;
}

/* command line */
.command {
    display: flex;
    height: 46px;
    padding: 7px 4px 3px 7px;
    border-top: 2px solid #909090;
    border-bottom: 1px solid #bdbdbd;
}
.command-grip {
    width: 4px;
    margin-right: 2px;
    border-left: 1px solid #b0b0b0;
    border-right: 1px solid #b0b0b0;
}
.command-box {
    flex: 1;
    border: 1px solid #777;
    border-right: none;
    border-top-width: 2px;
    border-bottom: none;
    background-color: #fff;
    font-family: "Liberation Mono", monospace;
    font-size: 11px;
}
.history {
    height: 18px;
    margin: 0;
    border-bottom: 1px solid #aaa;
    line-height: 13px;
}
.prompt {
    display: flex;
    line-height: 17px;
}
.prompt input {
    flex: 1;
    padding: 0 4px;
    border: none;
    outline: none;
    background: none;
    font: inherit;
}
.scroller {
    display: flex;
    flex-direction: column;
    justify-content: space-evenly;
    width: 14px;
    height: 20px;
    border: 1px solid #999;
    border-left: none;
}
.scroller svg {
    width: 8px;
    height: 8px;
    margin: auto;
    fill: none;
    stroke: #444;
}

/* status bar */
.status {
    display: flex;
    align-items: center;
    gap: 4px;
    height: 18px;
    padding: 3px 3px 0 4px;
    font-size: 9px;
}
.status button {
    height: 14px;
    padding: 0 1px;
    line-height: 13px;
    border-right: 1px solid #999;
}
.status .on {
    border: none;
    border-left: 1px solid #222;
    border-top: 1px solid #222;
    background-color: #fafafa;
}
.coords {
    width: 115px;
    height: 14px;
    line-height: 12px;
    border: 1px solid #bbb;
}
.status-tray {
    display: flex;
    gap: 2px;
    margin-left: auto;
    border: 1px solid #bbb;
    background-color: #fafafa;
}
.status-tray svg {
    width: 14px;
    height: 14px;
}
.status .tray-menu {
    width: 12px;
    height: 12px;
    border: none;
}
.tray-menu::after {
    content: "";
    display: block;
    width: 0;
    margin: 4px auto 0;
    border: 3px solid transparent;
    border-top-color: #000;
}
.status .clean {
    width: 13px;
    height: 13px;
    border: 2px solid #2d5f92;
    background-color: #b8d6ee;
}

/* notification balloon */
.balloon {
    position: absolute;
    right: 21px;
    bottom: 56px;
    display: grid;
    grid-template-columns: 12px 1fr 13px;
    column-gap: 8px;
    align-items: center;
    width: 236px;
    height: 61px;
    padding: 5px 6px 5px 8px;
    border: 1px solid #000;
    border-radius: 11px;
    background-color: #ffffe1;
}
.info {
    width: 12px;
    height: 12px;
}
.balloon h2 {
    margin: 0;
    font-size: 10px;
    line-height: 14px;
    font-weight: 700;
}
.balloon button {
    height: 13px;
    border: 1px solid #666;
    background-color: #fff;
}
.balloon button svg {
    stroke: #000;
    stroke-width: 2;
}
.balloon p {
    grid-column: 1 / -1;
    margin: 0 0 0 4px;
    font-family: Lato, sans-serif;
    font-size: 9px;
    line-height: 15px;
    white-space: nowrap;
}
.balloon a {
    color: #1a1ac8;
    text-decoration: underline;
}
.tail {
    position: absolute;
    top: 59px;
    right: 52px;
    width: 16px;
    height: 14px;
}

/* taskbar */
.taskbar {
    display: flex;
    height: 32px;
    background: linear-gradient(90deg, #20373f, #1e323c 60%, #1b2840 75%, #1b2940);
    color: #fff;
}
.start {
    display: grid;
    place-items: center;
    width: 39px;
}
.start svg {
    width: 14px;
    height: 14px;
}
.search {
    display: flex;
    align-items: center;
    gap: 8px;
    width: 229px;
    height: 31px;
    padding-left: 9px;
    background-color: #fff;
}
.search svg {
    width: 14px;
    height: 14px;
    fill: none;
    stroke: #222;
    stroke-width: 1.2;
}
.search input {
    flex: 1;
    min-width: 0;
    padding: 0;
    border: none;
    outline: none;
    background: none;
    font-family: "Open Sans", sans-serif;
    font-size: 11px;
}
.search input::placeholder {
    color: #444;
}
.apps {
    display: grid;
    grid-template-columns: repeat(12, 1fr);
    width: 471px;
}
.apps button {
    display: grid;
    place-items: center;
}
.apps svg {
    width: 20px;
    height: 20px;
}
.apps text {
    font-size: 9px;
    font-weight: bold;
    text-anchor: middle;
}
.apps .open {
    background: linear-gradient(#76b9ed, #76b9ed) center bottom / 32px 2px no-repeat;
}
.apps .current {
    background: linear-gradient(#76b9ed, #76b9ed) center bottom / 100% 2px no-repeat #4a5b64;
}
.tray {
    display: flex;
    align-items: center;
    margin-left: auto;
    padding-right: 12px;
    font-family: "Open Sans", "DejaVu Sans", sans-serif;
}
.assist {
    margin-right: 14px;
}
.assist svg {
    width: 20px;
    height: 20px;
}
.ask {
    font-size: 13px;
    font-weight: bold;
    fill: #fff;
    text-anchor: middle;
}
.weather {
    display: flex;
    align-items: center;
    gap: 9px;
    margin-right: 10px;
}
.weather svg {
    width: 16px;
    height: 20px;
}
.tray-icons {
    display: flex;
    gap: 5px;
}
.tray-icons svg {
    width: 14px;
    height: 14px;
    fill: none;
    stroke: #fff;
}
.lang {
    margin-left: 8px;
    font-size: 9px;
}
.clock {
    display: flex;
    flex-direction: column;
    align-items: center;
    margin: 0 13px 0 8px;
    font-size: 9px;
    line-height: 13px;
    white-space: nowrap;
}
.notify svg {
    width: 20px;
    height: 20px;
}
.notify text {
    font-size: 8px;
    fill: #fff;
    text-anchor: middle;
}
```
